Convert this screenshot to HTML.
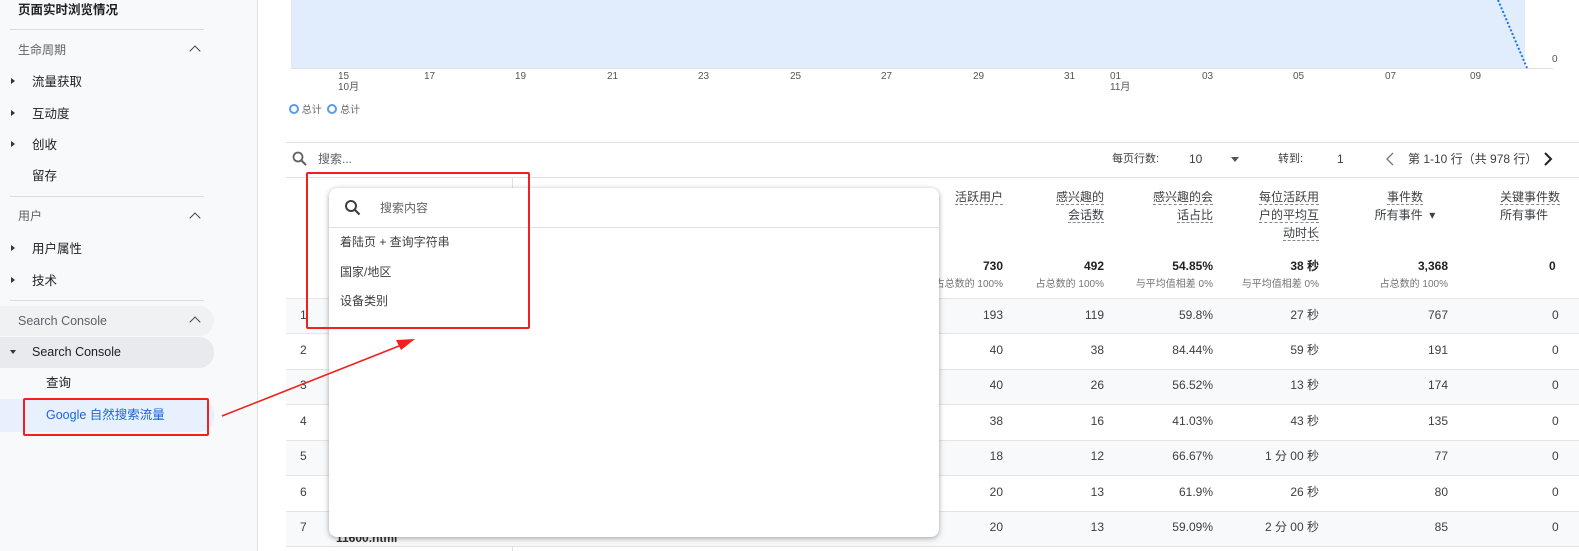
<!DOCTYPE html>
<html><head><meta charset="utf-8"><style>
*{margin:0;padding:0;box-sizing:border-box}
body{width:1579px;height:551px;overflow:hidden;background:#fff;position:relative;font-family:"Liberation Sans","Noto Sans CJK SC",sans-serif;color:#202124;font-size:12px}
.a{position:absolute;white-space:nowrap;line-height:16px}
.sb{position:absolute;left:0;top:0;width:258px;height:551px;background:#f8f9fa;border-right:1px solid #e3e3e3}
.dv{position:absolute;left:10px;width:194px;height:1px;background:#dadce0}
.tri{position:absolute;left:11px;width:0;height:0;border-top:3px solid transparent;border-bottom:3px solid transparent;border-left:4px solid #333}
.chev{position:absolute;left:191px;width:8px;height:8px;border-left:1.6px solid #444;border-top:1.6px solid #444;transform:rotate(45deg)}
.num{position:absolute;text-align:right;font-size:12px;color:#3c4043;width:100px;line-height:16px;white-space:nowrap}
.sub{font-size:10px;color:#70757a}
.hd{position:absolute;text-align:right;font-size:12px;color:#3c4043;line-height:18px}
.hd span{border-bottom:1px dashed #888}
.row{position:absolute;left:286px;width:1293px;height:36px;border-top:1px solid #e5e5e5}
.red{position:absolute;border:2px solid #f0211e;border-radius:2px}
.it{color:#202124;font-size:12.5px}
</style></head><body>
<div class="sb">
<div class="a it" style="left:18px;top:2px;font-weight:bold">页面实时浏览情况</div>
<div class="dv" style="top:29px"></div>
<div class="a" style="left:18px;top:42px;color:#5f6368">生命周期</div><div class="chev" style="top:47px"></div>
<div class="tri" style="top:78px"></div><div class="a it" style="left:32px;top:74px">流量获取</div>
<div class="tri" style="top:110px"></div><div class="a it" style="left:32px;top:106px">互动度</div>
<div class="tri" style="top:141px"></div><div class="a it" style="left:32px;top:137px">创收</div>
<div class="a it" style="left:32px;top:168px">留存</div>
<div class="dv" style="top:196px"></div>
<div class="a" style="left:18px;top:208px;color:#5f6368">用户</div><div class="chev" style="top:214px"></div>
<div class="tri" style="top:245px"></div><div class="a it" style="left:32px;top:241px">用户属性</div>
<div class="tri" style="top:277px"></div><div class="a it" style="left:32px;top:273px">技术</div>
<div class="dv" style="top:300px"></div>
<div class="a" style="left:0;top:306px;width:214px;height:30px;background:#eff1f3;border-radius:0 15px 15px 0"></div>
<div class="a" style="left:18px;top:313px;color:#5f6368;font-size:12.5px">Search Console</div><div class="chev" style="top:318px"></div>
<div class="a" style="left:0;top:337px;width:214px;height:31px;background:#e8eaed;border-radius:0 15px 15px 0"></div>
<div class="a" style="left:10px;top:350px;border-left:3px solid transparent;border-right:3px solid transparent;border-top:4px solid #333"></div>
<div class="a" style="left:32px;top:344px;font-size:12.5px">Search Console</div>
<div class="a it" style="left:46px;top:375px">查询</div>
<div class="a" style="left:0;top:399px;width:214px;height:33px;background:#e8f0fe;border-radius:0 15px 15px 0"></div>
<div class="a" style="left:46px;top:407px;color:#1967d2;font-size:12.5px">Google 自然搜索流量</div>
</div>
<!-- chart -->
<div class="a" style="left:291px;top:0;width:1234px;height:68px;background:#e1edfc"></div>
<div class="a" style="left:291px;top:68px;width:1262px;height:1px;background:#e0e0e0"></div>
<svg class="a" style="left:1490px;top:0" width="50" height="70"><path d="M8 0 L37 68" stroke="#1a73e8" stroke-width="2" stroke-dasharray="2 2" fill="none"/></svg>
<div class="a" style="left:1552px;top:52px;font-size:10px;color:#555">0</div>
<div class="a" style="left:0;top:71px;font-size:10px;color:#555;width:1579px">
<span class="a" style="left:338px;line-height:11px">15<br>10月</span><span class="a" style="left:424px;line-height:11px">17</span><span class="a" style="left:515px;line-height:11px">19</span><span class="a" style="left:607px;line-height:11px">21</span><span class="a" style="left:698px;line-height:11px">23</span><span class="a" style="left:790px;line-height:11px">25</span><span class="a" style="left:881px;line-height:11px">27</span><span class="a" style="left:973px;line-height:11px">29</span><span class="a" style="left:1064px;line-height:11px">31</span><span class="a" style="left:1110px;line-height:11px">01<br>11月</span><span class="a" style="left:1202px;line-height:11px">03</span><span class="a" style="left:1293px;line-height:11px">05</span><span class="a" style="left:1385px;line-height:11px">07</span><span class="a" style="left:1470px;line-height:11px">09</span></div>
<div class="a" style="left:289px;top:103px;font-size:10px;color:#666"><span style="display:inline-block;width:10px;height:10px;border:2px solid #5b9bf0;border-radius:50%;vertical-align:-1px"></span> 总计 &nbsp;<span style="display:inline-block;width:10px;height:10px;border:2px solid #5b9bf0;border-radius:50%;vertical-align:-1px"></span> 总计</div>
<div class="a" style="left:286px;top:142px;width:1293px;height:1px;background:#e0e0e0"></div>
<svg class="a" style="left:292px;top:151px" width="16" height="16"><circle cx="6" cy="6" r="4.5" stroke="#5f6368" stroke-width="1.8" fill="none"/><path d="M9.5 9.5L14 14" stroke="#5f6368" stroke-width="2"/></svg>
<div class="a" style="left:318px;top:151px;color:#5f6368">搜索...</div>
<div class="a" style="left:1112px;top:151px;font-size:11px;color:#3c4043">每页行数:</div>
<div class="a" style="left:1189px;top:151px;color:#3c4043">10</div>
<div class="a" style="left:1231px;top:157px;border-left:4px solid transparent;border-right:4px solid transparent;border-top:5px solid #555"></div>
<div class="a" style="left:1278px;top:151px;font-size:11px;color:#3c4043">转到:</div>
<div class="a" style="left:1337px;top:151px;color:#3c4043">1</div>
<svg class="a" style="left:1384px;top:151px" width="12" height="16"><path d="M9 2L3 8L9 14" stroke="#777" stroke-width="1.3" fill="none"/></svg>
<div class="a" style="left:1408px;top:151px;color:#3c4043">第 1-10 行（共 978 行）</div>
<svg class="a" style="left:1542px;top:151px" width="12" height="16"><path d="M3 2L9 8L3 14" stroke="#222" stroke-width="2" fill="none"/></svg>
<div class="a" style="left:286px;top:177px;width:1293px;height:1px;background:#e0e0e0"></div>
<div class="a" style="left:512px;top:177px;width:1px;height:374px;background:#e0e0e0"></div>
<!-- headers -->
<div class="hd" style="left:903px;top:188px;width:100px"><span>活跃用户</span></div>
<div class="hd" style="left:1004px;top:188px;width:100px"><span>感兴趣的</span><br><span>会话数</span></div>
<div class="hd" style="left:1113px;top:188px;width:100px"><span>感兴趣的会</span><br><span>话占比</span></div>
<div class="hd" style="left:1219px;top:188px;width:100px"><span>每位活跃用</span><br><span>户的平均互</span><br><span>动时长</span></div>
<div class="hd" style="top:188px;width:100px;text-align:center;left:1355px"><span>事件数</span><br>所有事件 &nbsp;▾</div>
<div class="hd" style="left:1500px;top:188px;text-align:left"><span>关键事件数</span><br>所有事件</div>
<div class="num" style="left:903px;top:258px;font-weight:bold;color:#202124">730</div><div class="num sub" style="left:903px;top:277px">占总数的 100%</div>
<div class="num" style="left:1004px;top:258px;font-weight:bold;color:#202124">492</div><div class="num sub" style="left:1004px;top:277px">占总数的 100%</div>
<div class="num" style="left:1113px;top:258px;font-weight:bold;color:#202124">54.85%</div><div class="num sub" style="left:1113px;top:277px">与平均值相差 0%</div>
<div class="num" style="left:1219px;top:258px;font-weight:bold;color:#202124">38 秒</div><div class="num sub" style="left:1219px;top:277px">与平均值相差 0%</div>
<div class="num" style="left:1348px;top:258px;font-weight:bold;color:#202124">3,368</div><div class="num sub" style="left:1348px;top:277px">占总数的 100%</div>
<div class="a" style="left:1549px;top:258px;font-weight:bold">0</div>
<!-- rows -->
<div class="row" style="top:298px;background:#f8f9fa"></div>
<div class="row" style="top:333px"></div>
<div class="row" style="top:369px;background:#f8f9fa"></div>
<div class="row" style="top:404px"></div>
<div class="row" style="top:440px;background:#f8f9fa"></div>
<div class="row" style="top:475px"></div>
<div class="row" style="top:511px;background:#f8f9fa"></div>
<div class="a" style="left:286px;top:546px;width:1293px;height:1px;background:#e0e0e0"></div>
<div style="position:absolute;left:0;top:0;color:#3c4043">
<div class="a" style="left:300px;top:307px">1</div><div class="a" style="left:300px;top:342px">2</div><div class="a" style="left:300px;top:377px">3</div><div class="a" style="left:300px;top:413px">4</div><div class="a" style="left:300px;top:448px">5</div><div class="a" style="left:300px;top:484px">6</div><div class="a" style="left:300px;top:519px">7</div>
</div>
<div class="a" style="left:336px;top:530px;font-weight:bold;color:#333">11600.html</div>
<div style="position:absolute;left:0;top:0">
<div class="num" style="left:903px;top:307px">193</div><div class="num" style="left:1004px;top:307px">119</div><div class="num" style="left:1113px;top:307px">59.8%</div><div class="num" style="left:1219px;top:307px">27 秒</div><div class="num" style="left:1348px;top:307px">767</div>
<div class="num" style="left:903px;top:342px">40</div><div class="num" style="left:1004px;top:342px">38</div><div class="num" style="left:1113px;top:342px">84.44%</div><div class="num" style="left:1219px;top:342px">59 秒</div><div class="num" style="left:1348px;top:342px">191</div>
<div class="num" style="left:903px;top:377px">40</div><div class="num" style="left:1004px;top:377px">26</div><div class="num" style="left:1113px;top:377px">56.52%</div><div class="num" style="left:1219px;top:377px">13 秒</div><div class="num" style="left:1348px;top:377px">174</div>
<div class="num" style="left:903px;top:413px">38</div><div class="num" style="left:1004px;top:413px">16</div><div class="num" style="left:1113px;top:413px">41.03%</div><div class="num" style="left:1219px;top:413px">43 秒</div><div class="num" style="left:1348px;top:413px">135</div>
<div class="num" style="left:903px;top:448px">18</div><div class="num" style="left:1004px;top:448px">12</div><div class="num" style="left:1113px;top:448px">66.67%</div><div class="num" style="left:1219px;top:448px">1 分 00 秒</div><div class="num" style="left:1348px;top:448px">77</div>
<div class="num" style="left:903px;top:484px">20</div><div class="num" style="left:1004px;top:484px">13</div><div class="num" style="left:1113px;top:484px">61.9%</div><div class="num" style="left:1219px;top:484px">26 秒</div><div class="num" style="left:1348px;top:484px">80</div>
<div class="num" style="left:903px;top:519px">20</div><div class="num" style="left:1004px;top:519px">13</div><div class="num" style="left:1113px;top:519px">59.09%</div><div class="num" style="left:1219px;top:519px">2 分 00 秒</div><div class="num" style="left:1348px;top:519px">85</div>
<div class="a" style="left:1552px;top:307px;color:#3c4043">0</div><div class="a" style="left:1552px;top:342px;color:#3c4043">0</div><div class="a" style="left:1552px;top:377px;color:#3c4043">0</div><div class="a" style="left:1552px;top:413px;color:#3c4043">0</div><div class="a" style="left:1552px;top:448px;color:#3c4043">0</div><div class="a" style="left:1552px;top:484px;color:#3c4043">0</div><div class="a" style="left:1552px;top:519px;color:#3c4043">0</div>
</div>
<!-- popup -->
<div class="a" style="left:329px;top:188px;width:610px;height:349px;background:#fff;border-radius:8px;box-shadow:0 1px 4px rgba(0,0,0,.25),0 2px 8px rgba(0,0,0,.12)">
<svg class="a" style="left:15px;top:11px" width="18" height="18"><circle cx="7" cy="7" r="5" stroke="#3c4043" stroke-width="2" fill="none"/><path d="M10.5 10.5L15.5 15.5" stroke="#3c4043" stroke-width="2.2"/></svg>
<div class="a" style="left:51px;top:12px;color:#5f6368">搜索内容</div>
<div class="a" style="left:0;top:39px;width:610px;height:1px;background:#e0e0e0"></div>
<div class="a" style="left:11px;top:46px;color:#3c4043">着陆页 + 查询字符串</div>
<div class="a" style="left:11px;top:76px;color:#3c4043">国家/地区</div>
<div class="a" style="left:11px;top:105px;color:#3c4043">设备类别</div>
</div>
<!-- annotations -->
<div class="red" style="left:306px;top:172px;width:224px;height:157px"></div>
<div class="red" style="left:23px;top:398px;width:186px;height:38px"></div>
<svg class="a" style="left:0;top:0" width="1579" height="551"><path d="M222 416 L404 344" stroke="#f0211e" stroke-width="1.6" fill="none"/><path d="M415 339 L396 340 L401 350 Z" fill="#f0211e"/></svg>
</body></html>
